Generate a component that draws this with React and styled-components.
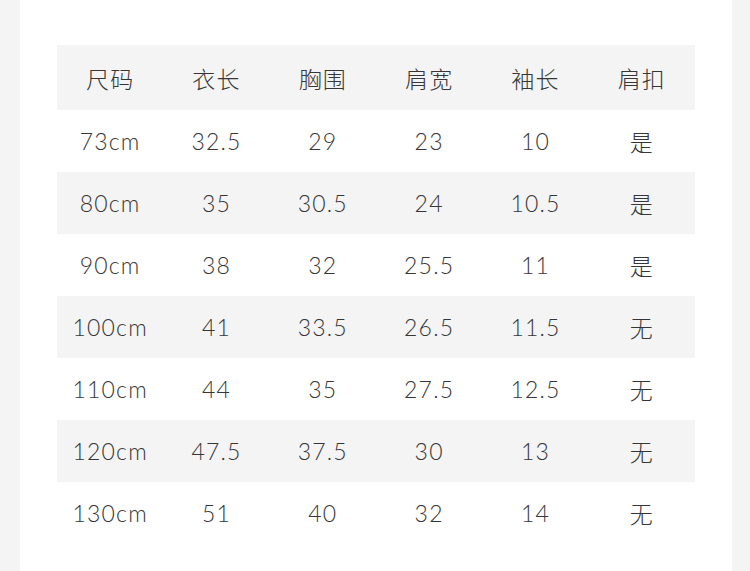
import styled, { createGlobalStyle } from "styled-components";

const GlobalStyle = createGlobalStyle`
  html, body {
    margin: 0;
    padding: 0;
    background: #f4f4f4;
  }
`;

const headers = ["尺码", "衣长", "胸围", "肩宽", "袖长", "肩扣"];

const rows = [
  ["73cm", "32.5", "29", "23", "10", "是"],
  ["80cm", "35", "30.5", "24", "10.5", "是"],
  ["90cm", "38", "32", "25.5", "11", "是"],
  ["100cm", "41", "33.5", "26.5", "11.5", "无"],
  ["110cm", "44", "35", "27.5", "12.5", "无"],
  ["120cm", "47.5", "37.5", "30", "13", "无"],
  ["130cm", "51", "40", "32", "14", "无"],
];

const App = () => {
  return (
    <Page>
      <GlobalStyle />
      <Card>
        <Table>
          <HeadRow>
            {headers.map((h) => (
              <Cell key={h}>{h}</Cell>
            ))}
          </HeadRow>
          {rows.map((r, i) => (
            <Row key={r[0]} $shaded={i % 2 === 1}>
              {r.map((v, j) => (
                <Cell key={j}>{v}</Cell>
              ))}
            </Row>
          ))}
        </Table>
      </Card>
    </Page>
  );
};

const Page = styled.div`
  width: 750px;
  height: 571px;
  padding: 0 18px 0 20px;
  box-sizing: border-box;
  background: #f4f4f4;
`;

const Card = styled.div`
  height: 100%;
  background: #ffffff;
  padding: 45px 37px 0 37px;
  box-sizing: border-box;
`;

const Table = styled.div`
  display: flex;
  flex-direction: column;
`;

const Row = styled.div`
  display: grid;
  grid-template-columns: repeat(6, 1fr);
  height: 62px;
  align-items: center;
  background: ${({ $shaded }) => ($shaded ? "#f4f4f4" : "#ffffff")};
`;

const HeadRow = styled(Row)`
  height: 65px;
  background: #f4f4f4;
`;

const Cell = styled.div`
  text-align: center;
  font-family: "Lato", "Noto Sans CJK SC", sans-serif;
  font-weight: 300;
  font-size: 23px;
  letter-spacing: 1.2px;
  color: #363636;
`;

export default App;
